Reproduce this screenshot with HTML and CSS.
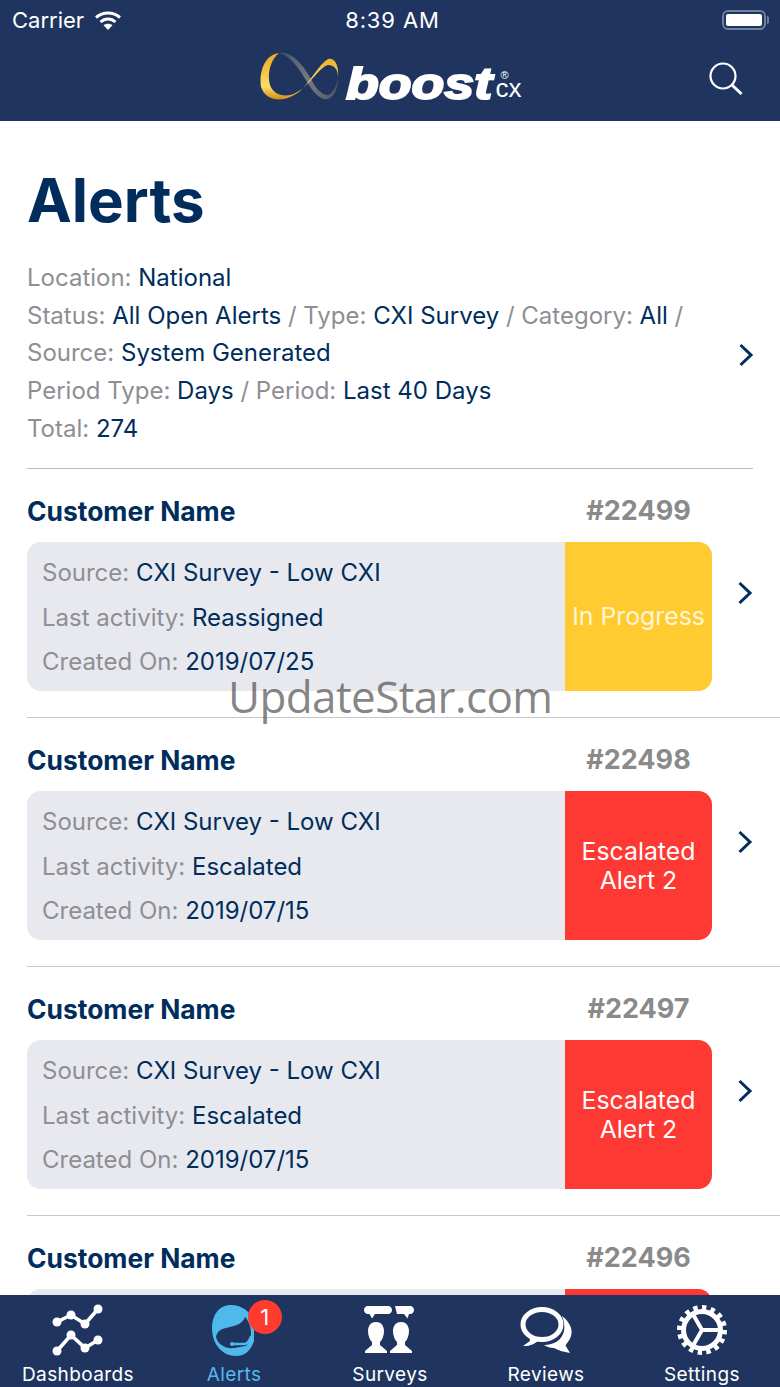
FILE: index.html
```html
<!DOCTYPE html>
<html lang="en">
<head>
  <meta charset="UTF-8">
  <meta name="viewport" content="width=device-width, initial-scale=1.0">
  <title>Alerts</title>
  <link rel="stylesheet" href="styles.css">
</head>
<body>
  <div class="app-header">
    <div class="status-bar">
      <div class="carrier">
        <span>Carrier</span>
        <svg class="wifi" viewBox="0 0 26 19">
          <path d="M1 6.500C8 .5 18 .5 25 6.500" fill="none" stroke="#fff" stroke-width="3"/>
          <path d="M5.500 11C10 7 16 7 20.500 11" fill="none" stroke="#fff" stroke-width="3"/>
          <path d="M13 19L8.500 14.200C11 12.200 15 12.200 17.500 14.200Z" fill="#fff"/>
        </svg>
      </div>
      <div class="clock">8:39 AM</div>
      <div class="battery"><div class="battery-level"></div></div>
    </div>
    <div class="nav-bar">
      <div class="logo">
        <svg class="logo-mark" viewBox="0 0 84 52">
          <defs>
            <linearGradient id="gold" x1="0" y1="0" x2="0" y2="1">
              <stop offset="0" stop-color="#eba91a"/>
              <stop offset="0.72" stop-color="#ffdc68"/>
              <stop offset="1" stop-color="#d08c10"/>
            </linearGradient>
            <linearGradient id="steel" x1="0" y1="0" x2="1" y2="0">
              <stop offset="0" stop-color="#3c4a68"/>
              <stop offset="0.5" stop-color="#767a80"/>
              <stop offset="1" stop-color="#4d525c"/>
            </linearGradient>
          </defs>
          <path d="M20 3C33 1 44 15 52 29C57 39 63 45 69 45C75 43 78 34 79 27C79 36 77 46 69 49C62 51 54 42 48 32C41 20 32 6 20 3Z" fill="url(#steel)"/>
          <path d="M20 3C4 5 0 25 2 37C8 54 28 52 41 41C52 31 60 14 69 9C76 7 80 16 79 27C79 19 75 15 69 15C61 17 52 33 40 41C28 49 15 46 11 35C8 25 11 10 20 3Z" fill="url(#gold)"/>
        </svg>
        <span class="logo-word">boost</span>
        <span class="logo-cx"><sup>&reg;</sup>cx</span>
      </div>
      <svg class="search-icon" viewBox="0 0 34 34">
        <circle cx="14" cy="14" r="12.500" fill="none" stroke="#fff" stroke-width="2.200"/>
        <path d="M23 23L32.500 32" stroke="#fff" stroke-width="3"/>
      </svg>
    </div>
  </div>

  <div class="content">
    <h1 class="page-title">Alerts</h1>

    <div class="filters">
      <div class="filter-text">
        <div>Location: <b>National</b></div>
        <div>Status: <b>All Open Alerts</b> / Type: <b>CXI Survey</b> / Category: <b>All</b> /</div>
        <div>Source: <b>System Generated</b></div>
        <div>Period Type: <b>Days</b> / Period: <b>Last 40 Days</b></div>
        <div>Total: <b>274</b></div>
      </div>
      <svg class="chevron filter-chevron" viewBox="0 0 16 24"><path d="M2.500 2L13 12L2.500 22" fill="none" stroke="#002d5c" stroke-width="3"/></svg>
    </div>

    <div class="alert-item">
      <div class="alert-head">
        <span class="customer">Customer Name</span>
        <span class="alert-id">#22499</span>
      </div>
      <div class="alert-body">
        <div class="alert-card">
          <div class="alert-info">
            <div>Source: <b>CXI Survey - Low CXI</b></div>
            <div>Last activity: <b>Reassigned</b></div>
            <div>Created On: <b>2019/07/25</b></div>
          </div>
          <div class="alert-status progress">In Progress</div>
        </div>
        <svg class="chevron" viewBox="0 0 16 24"><path d="M2.500 2L13 12L2.500 22" fill="none" stroke="#002d5c" stroke-width="3"/></svg>
      </div>
    </div>

    <div class="alert-item">
      <div class="alert-head">
        <span class="customer">Customer Name</span>
        <span class="alert-id">#22498</span>
      </div>
      <div class="alert-body">
        <div class="alert-card">
          <div class="alert-info">
            <div>Source: <b>CXI Survey - Low CXI</b></div>
            <div>Last activity: <b>Escalated</b></div>
            <div>Created On: <b>2019/07/15</b></div>
          </div>
          <div class="alert-status escalated">Escalated<br>Alert 2</div>
        </div>
        <svg class="chevron" viewBox="0 0 16 24"><path d="M2.500 2L13 12L2.500 22" fill="none" stroke="#002d5c" stroke-width="3"/></svg>
      </div>
    </div>

    <div class="alert-item">
      <div class="alert-head">
        <span class="customer">Customer Name</span>
        <span class="alert-id">#22497</span>
      </div>
      <div class="alert-body">
        <div class="alert-card">
          <div class="alert-info">
            <div>Source: <b>CXI Survey - Low CXI</b></div>
            <div>Last activity: <b>Escalated</b></div>
            <div>Created On: <b>2019/07/15</b></div>
          </div>
          <div class="alert-status escalated">Escalated<br>Alert 2</div>
        </div>
        <svg class="chevron" viewBox="0 0 16 24"><path d="M2.500 2L13 12L2.500 22" fill="none" stroke="#002d5c" stroke-width="3"/></svg>
      </div>
    </div>

    <!-- last row runs under the tab bar, only the card top shows -->
    <div class="alert-item">
      <div class="alert-head">
        <span class="customer">Customer Name</span>
        <span class="alert-id">#22496</span>
      </div>
      <div class="alert-body">
        <div class="alert-card">
          <div class="alert-info"></div>
          <div class="alert-status escalated"></div>
        </div>
      </div>
    </div>
  </div>

  <div class="tab-bar">
    <div class="tab">
      <svg class="tab-icon" viewBox="0 0 60 54">
        <g fill="none" stroke="#fff" stroke-width="3.600">
          <path d="M9 19L23 12L37 21L50 6"/>
          <path d="M9 48L23 32L37 45L50 37"/>
        </g>
        <g fill="#fff">
          <circle cx="9" cy="19" r="4.500"/><circle cx="23" cy="12" r="4.500"/><circle cx="37" cy="21" r="4.500"/><circle cx="50" cy="6" r="4.500"/>
          <circle cx="9" cy="48" r="4.500"/><circle cx="23" cy="32" r="4.500"/><circle cx="37" cy="45" r="4.500"/><circle cx="50" cy="37" r="4.500"/>
        </g>
      </svg>
      <span>Dashboards</span>
    </div>
    <div class="tab active">
      <svg class="tab-icon" viewBox="0 0 60 54">
        <path d="M27 2C15 2 8 12 8 25C8 41 18 53 32 53C41 53 47 47 50 38L50 18C46 8 37 2 27 2Z" fill="#4fb9ec"/>
        <path d="M12 34C13 29 16 26 22 25C30 23 38 22 41 14C44 17 47 23 47 30C47 36 45 40 42 43L30 45C22 46 14 42 12 34Z" fill="#1f3560"/>
        <path d="M28 41H41C44 40 46 37 47 33" fill="none" stroke="#4fb9ec" stroke-width="2.400"/>
        <circle cx="28" cy="41" r="2" fill="#4fb9ec"/>
      </svg>
      <span class="badge">1</span>
      <span>Alerts</span>
    </div>
    <div class="tab">
      <svg class="tab-icon" viewBox="0 0 60 54">
        <g fill="#fff">
          <path d="M8 3H28C30.500 3 32 5 32 7C32 9 30.500 11 28 11H15L12 15.500L9.500 11H8C5.500 11 4 9 4 7C4 5 5.500 3 8 3Z"/>
          <path d="M35 3H50C52.500 3 54 5 54 7C54 9 52.500 11 50 11H49L47.500 15.500L44 11H37Z"/>
          <path d="M16 19C10 19 8 24 8 28C8 33 10 37 12 39L12 42L5 48L5 50H27V48L20 42L20 39C22 37 24 33 24 28C24 24 22 19 16 19Z"/>
          <path d="M41 19C35 19 33 24 33 28C33 33 35 37 37 39L37 42L30 48L30 50H52V48L45 42L45 39C47 37 49 33 49 28C49 24 47 19 41 19Z"/>
        </g>
      </svg>
      <span>Surveys</span>
    </div>
    <div class="tab">
      <svg class="tab-icon" viewBox="0 0 60 54">
        <path d="M46 13C54 19 57 27 55 33C54 37 51 40 49.500 42.500L54 50C47 49 42 47 38 45C34 45 31 44 28 42C38 42 46 37 48 28C49 23 48 18 46 13Z" fill="#fff"/>
        <ellipse cx="26" cy="21.500" rx="19" ry="15" fill="none" stroke="#fff" stroke-width="5"/>
        <path d="M13 31L14 38L7 43C13 43.500 19 41 23 37Z" fill="#fff"/>
      </svg>
      <span>Reviews</span>
    </div>
    <div class="tab">
      <svg class="tab-icon" viewBox="0 0 60 54">
        <g fill="none" stroke="#fff">
          <circle cx="30" cy="27" r="22" stroke-width="6" pathLength="32" stroke-dasharray="1 1"/>
          <circle cx="30" cy="27" r="18.500" stroke-width="5"/>
          <path d="M30 27L49 27M30 27L20.500 10.500M30 27L20.500 43.500" stroke-width="4"/>
        </g>
      </svg>
      <span>Settings</span>
    </div>
  </div>

  <div class="watermark">UpdateStar.com</div>
</body>
</html>
```

FILE: styles.css
```css
body {
  margin: 0;
  height: 100vh;
  display: flex;
  flex-direction: column;
  overflow: hidden;
  position: relative;
  background: #fff;
  font-family: Inter, "Liberation Sans", sans-serif;
  color: #8e8e93;
}
b { font-weight: 400; color: #002d5c; }

/* Header */
.app-header { background: #1f3560; color: #fff; flex-shrink: 0; height: 121px; }
.status-bar {
  height: 40px;
  display: grid;
  grid-template-columns: 1fr auto 1fr;
  align-items: center;
  padding: 0 10px 0 12px;
  font-size: 22px;
}
.carrier { display: flex; align-items: center; gap: 11px; }
.wifi { width: 26px; height: 19px; }
.clock { letter-spacing: 0.900px; margin-left: 3px; }
.battery {
  width: 44px;
  height: 20px;
  box-sizing: border-box;
  border: 2px solid #6f80a0;
  border-radius: 6px;
  padding: 2px;
  margin-right: 4px;
  justify-self: end;
  position: relative;
}
.battery::after {
  content: "";
  position: absolute;
  right: -5px;
  top: 4px;
  width: 2px;
  height: 8px;
  background: #6f80a0;
  border-radius: 0 2px 2px 0;
}
.battery-level { height: 100%; background: #fff; border-radius: 2px; }
.nav-bar {
  height: 81px;
  display: flex;
  align-items: flex-start;
  justify-content: center;
  position: relative;
}
.logo {
  display: flex;
  align-items: flex-start;
  margin-top: 10px;
  color: #fff;
  font-family: "Liberation Sans", sans-serif;
}
.logo-mark { width: 84px; height: 52px; }
.logo-word {
  width: 150px;
  margin: 8px 0 0 3px;
  font-size: 44px;
  line-height: 52px;
  font-weight: 700;
  font-style: italic;
  -webkit-text-stroke: 2px #fff;
  transform: scaleX(1.220);
  transform-origin: left center;
}
.logo-cx { margin-top: 30px; font-size: 26px; line-height: 16px; position: relative; }
.logo-cx sup { position: absolute; left: 5px; top: -10px; font-size: 11px; line-height: 11px; }
.search-icon { position: absolute; right: 37px; top: 22px; width: 34px; height: 34px; }

/* Main list */
.content { flex: 1; overflow: hidden; min-height: 0; }
.page-title {
  margin: 43px 0 23px 27px;
  font-size: 60px;
  line-height: 72px;
  font-weight: 700;
  color: #002d5c;
}
.filters {
  margin: 0 27px;
  padding-bottom: 20px;
  border-bottom: 1px solid #b9b9bd;
  display: flex;
  align-items: center;
  justify-content: space-between;
}
.filter-text { font-size: 24px; line-height: 37.700px; }
.chevron { width: 16px; height: 24px; flex-shrink: 0; margin-bottom: 46px; }
.filter-chevron { margin: 3px -1px 0 0; }
.alert-item {
  margin-left: 27px;
  padding: 27px 0 26px;
  border-bottom: 1px solid #c8c8cc;
}
.alert-head {
  display: flex;
  align-items: center;
  justify-content: space-between;
  height: 30px;
  margin-bottom: 16px;
  padding-right: 68px;
}
.customer { font-size: 26.400px; font-weight: 700; color: #002d5c; }
.alert-id { width: 147px; text-align: center; font-size: 27px; font-weight: 700; color: #8a8a8a; }
.alert-body { display: flex; align-items: center; }
.alert-card {
  width: 685px;
  height: 149px;
  display: flex;
  background: #e8e9ef;
  border-radius: 14px;
  overflow: hidden;
  margin-right: 25px;
}
.alert-info {
  flex: 1;
  padding: 4px 0 0 15px;
  display: flex;
  flex-direction: column;
  justify-content: center;
  font-size: 24px;
  line-height: 44.500px;
}
.alert-status {
  width: 147px;
  display: flex;
  align-items: center;
  justify-content: center;
  text-align: center;
  font-size: 24.800px;
  line-height: 29px;
  color: #fff;
}
.alert-status.progress { background: #ffcb30; color: #fff6d8; }
.alert-status.escalated { background: #fe3934; padding-top: 2px; }

/* Bottom tabs */
.tab-bar {
  height: 92px;
  flex-shrink: 0;
  display: grid;
  grid-template-columns: repeat(5, 1fr);
  background: #1f3560;
  color: #fff;
  position: relative;
}
.tab {
  display: flex;
  flex-direction: column;
  align-items: center;
  padding-top: 8px;
  font-size: 19px;
  line-height: 24px;
  letter-spacing: 0.400px;
  position: relative;
}
.tab-icon { width: 60px; height: 54px; margin-bottom: 6px; }
.tab.active { color: #57b8ec; }
.badge {
  position: absolute;
  left: 92px;
  top: 5px;
  width: 34px;
  height: 34px;
  border-radius: 50%;
  background: #ff3b30;
  color: #fff;
  font-size: 22px;
  line-height: 34px;
  text-align: center;
}

.watermark {
  position: absolute;
  left: 228px;
  top: 665px;
  font-family: "Open Sans", sans-serif;
  font-size: 44px;
  line-height: 62px;
  letter-spacing: -0.600px;
  color: rgba(80, 80, 80, 0.7);
}
```
